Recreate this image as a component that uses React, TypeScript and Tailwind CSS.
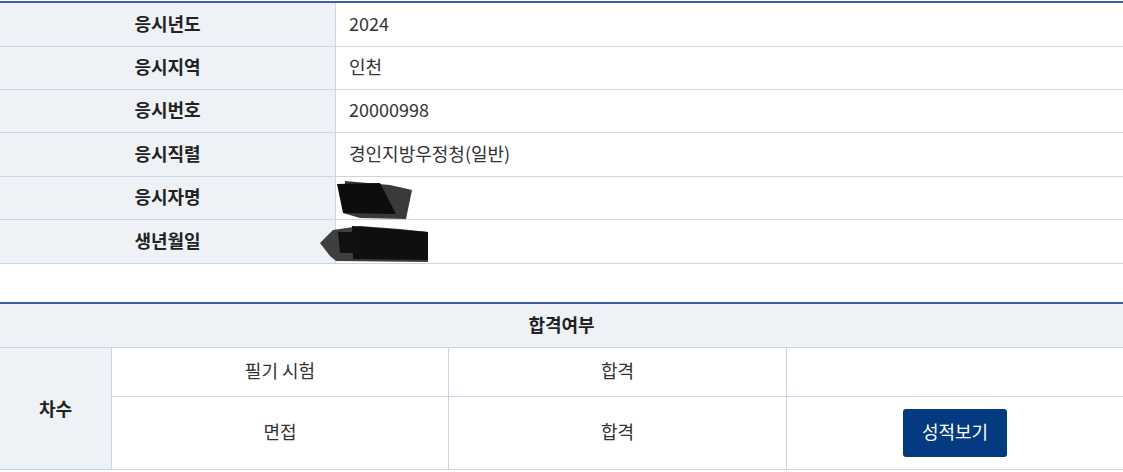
import React from 'react';

const info = [
  { label: '응시년도', value: '2024', h: 'h-[44px]' },
  { label: '응시지역', value: '인천', h: 'h-[43px]' },
  { label: '응시번호', value: '20000998', h: 'h-[43px]' },
  { label: '응시직렬', value: '경인지방우정청(일반)', h: 'h-[44px]' },
  { label: '응시자명', value: '', h: 'h-[43px]' },
  { label: '생년월일', value: '', h: 'h-[44px]' },
];

const font = { fontFamily: '"Noto Sans CJK KR", "Noto Sans", sans-serif' };

export default function App() {
  return (
    <div className="w-[1123px] h-[472px] bg-white text-[18px] text-[#333] overflow-hidden" style={font}>
      {/* 기본 정보 */}
      <div className="relative mt-px border-t-2 border-[#3b5fa6]">
        {info.map((row) => (
          <div key={row.label} className={`flex ${row.h} border-b border-[#c8d6e5]`}>
            <div className="w-[336px] shrink-0 bg-[#eef2f7] border-r border-[#c8d6e5] flex items-center justify-center pb-[3px] font-bold text-[#222]">
              {row.label}
            </div>
            <div className="flex-1 flex items-center pl-[13px] pb-[3px]">{row.value}</div>
          </div>
        ))}

        {/* 가림 처리 */}
        <svg className="absolute left-[318px] top-[170px] pointer-events-none" width="120" height="96" viewBox="0 0 120 96">
          <polygon points="27,8 72,12 94,17 88,46 42,45 25,40" fill="#3a3a3a" />
          <polygon points="19,11 62,10 78,41 25,40" fill="#0d0d0d" />
          <polygon points="2,70 15,57 42,53 82,56 110,59 110,89 18,88 12,83" fill="#3f3f3f" />
          <polygon points="34,53 110,59 110,87 35,86" fill="#0f0f0f" />
          <polygon points="20,59 40,59 40,80 22,80" fill="#111" />
        </svg>
      </div>

      {/* 합격여부 */}
      <div className="mt-[38px] border-t-2 border-[#3b5fa6]">
        <div className="h-[44px] bg-[#eef2f7] border-b border-[#c8d6e5] flex items-center justify-center pb-[3px] font-bold text-[#222]">
          합격여부
        </div>
        <div className="flex border-b border-[#c8d6e5]">
          <div className="w-[112px] shrink-0 bg-[#eef2f7] border-r border-[#c8d6e5] flex items-center justify-center font-bold text-[#222]">
            차수
          </div>
          <div className="flex-1 flex flex-col">
            <div className="h-[49px] grid grid-cols-[337px_338px_1fr] border-b border-[#c8d6e5]">
              <div className="flex items-center justify-center pb-[4px] border-r border-[#c8d6e5]">필기 시험</div>
              <div className="flex items-center justify-center pb-[4px] border-r border-[#c8d6e5]">합격</div>
              <div />
            </div>
            <div className="h-[72px] grid grid-cols-[337px_338px_1fr]">
              <div className="flex items-center justify-center pb-[3px] border-r border-[#c8d6e5]">면접</div>
              <div className="flex items-center justify-center pb-[3px] border-r border-[#c8d6e5]">합격</div>
              <div className="flex items-center justify-center">
                <button className="w-[104px] h-[48px] rounded-[3px] bg-[#033a80] text-white text-[18px] pb-[4px]">성적보기</button>
              </div>
            </div>
          </div>
        </div>
      </div>
    </div>
  );
}
